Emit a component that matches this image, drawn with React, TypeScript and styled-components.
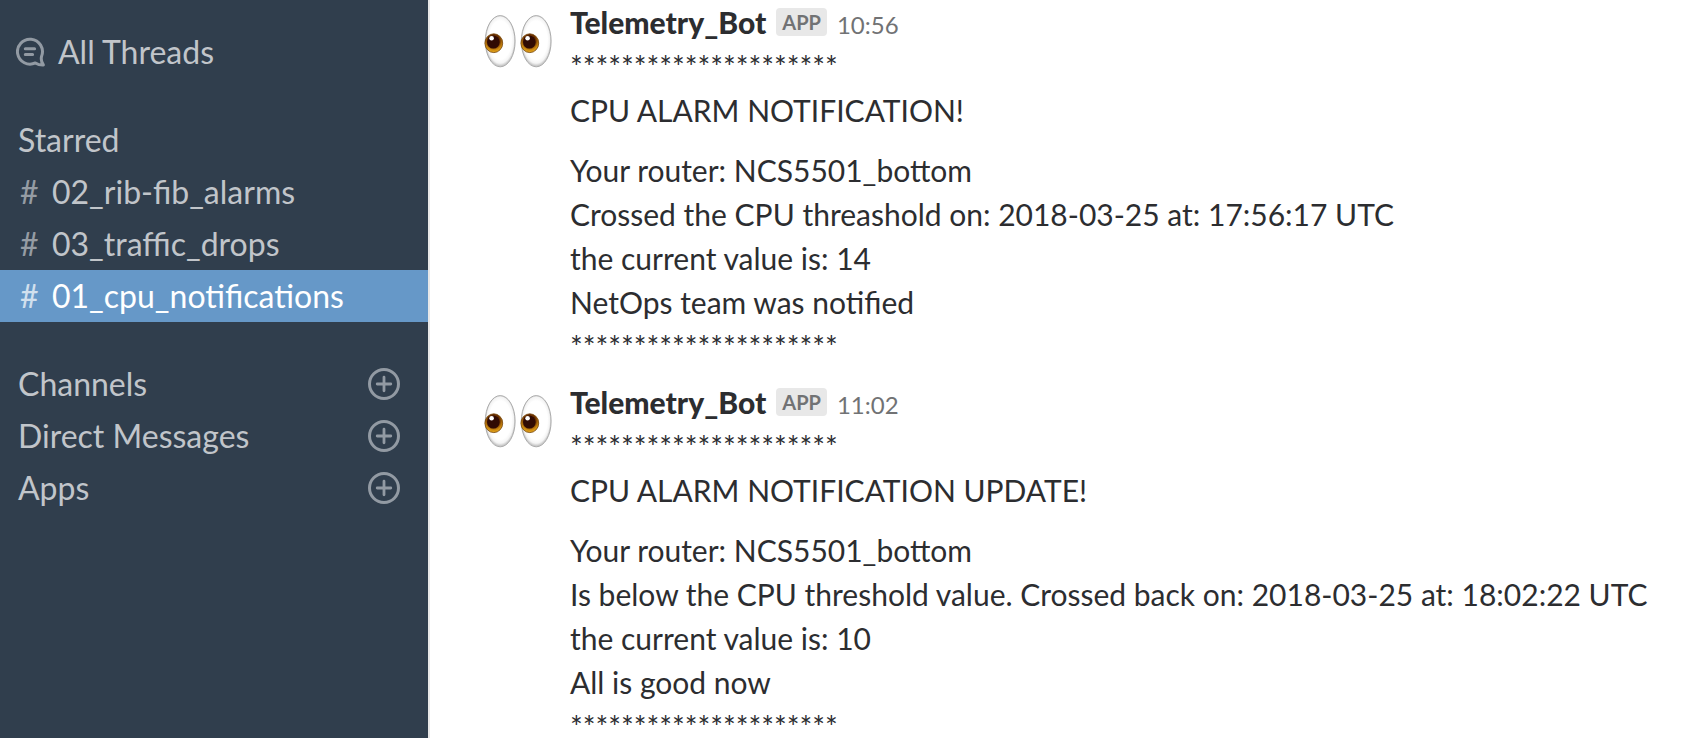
import React from "react";
import styled, { createGlobalStyle } from "styled-components";

const GlobalStyle = createGlobalStyle`
  *, *::before, *::after { box-sizing: border-box; }
  body {
    margin: 0;
    background: #ffffff;
    color: #2c2d30;
    font-family: Lato, "Open Sans", sans-serif;
    font-size: 30px;
    line-height: 44px;
  }
`;

const Shell = styled.div`
  display: grid;
  grid-template-columns: 430px minmax(0, 1fr);
  height: 100vh;
`;

const Sidebar = styled.nav`
  display: flex;
  flex-direction: column;
  gap: 36px;
  padding: 26px 0;
  background: #303e4d;
  border-right: 2px solid #e8e8e8;
  color: #c1c5ca;
  font-size: 32px;
  line-height: 52px;
  overflow: hidden;
`;

const ThreadsLink = styled.a`
  display: flex;
  align-items: center;
  gap: 12px;
  padding-left: 16px;
  color: inherit;
  text-decoration: none;
`;

const Group = styled.section`
  display: flex;
  flex-direction: column;
`;

const GroupRow = styled.div`
  display: flex;
  align-items: center;
  justify-content: space-between;
  padding: 0 28px 0 18px;
`;

const GroupTitle = styled.h2`
  margin: 0;
  font-size: inherit;
  font-weight: 400;
`;

const ChannelList = styled.ul`
  margin: 0;
  padding: 0;
  list-style: none;
`;

const ChannelLink = styled.a<{ $active?: boolean }>`
  display: flex;
  padding-left: 20px;
  background: ${(p) => (p.$active ? "#6698c8" : "transparent")};
  color: ${(p) => (p.$active ? "#ffffff" : "inherit")};
  text-decoration: none;
`;

const Hash = styled.span`
  width: 32px;
  flex: none;
  opacity: 0.7;
`;

const AddButton = styled.button`
  display: flex;
  padding: 0;
  border: 0;
  background: none;
  color: #929aa3;
  cursor: pointer;
`;

const Messages = styled.main`
  display: flex;
  flex-direction: column;
  gap: 12px;
  padding: 0 32px 0 52px;
  overflow-y: auto;
  scrollbar-width: none;
`;

const MessageRow = styled.article`
  display: grid;
  grid-template-columns: 72px minmax(0, 1fr);
  column-gap: 16px;
`;

const Avatar = styled.div`
  padding-top: 5px;
`;

const Header = styled.header`
  display: flex;
  align-items: baseline;
  height: 44px;
`;

const Author = styled.a`
  color: #2c2d30;
  font-weight: 900;
  text-decoration: none;
`;

const Badge = styled.span`
  align-self: flex-start;
  margin: 8px 10px 0;
  padding: 0 6px;
  border-radius: 4px;
  background: #e8e8e8;
  color: #717274;
  font-size: 20px;
  font-weight: 700;
  line-height: 28px;
`;

const Time = styled.time`
  color: #717274;
  font-size: 24px;
`;

const Paragraph = styled.p`
  margin: 0 0 16px;

  &:last-child {
    margin-bottom: 0;
  }
`;

const Line = styled.span`
  display: block;
`;

function ThreadsIcon() {
  return (
    <svg width="30" height="30" viewBox="0 0 30 30" fill="none" stroke="#929aa3" strokeLinecap="round" strokeLinejoin="round" aria-hidden="true">
      <path
        strokeWidth="3"
        d="M25.6 19.2 A12.5 12.5 0 1 0 19.4 25.9 Q23 28.2 27.4 28 C25.6 25.6 24.8 22.4 25.6 19.2 Z"
      />
      <path strokeWidth="3" d="M9.3 11.8H18.6M9.3 17.5H16.6" />
    </svg>
  );
}

function PlusIcon() {
  return (
    <svg width="32" height="32" viewBox="0 0 32 32" fill="none" stroke="currentColor" strokeLinecap="round" aria-hidden="true">
      <circle cx="16" cy="16" r="14.5" strokeWidth="3" />
      <path strokeWidth="2.8" d="M16 9.2V22.8M9.2 16H22.8" />
    </svg>
  );
}

function EyesIcon({ id }: { id: string }) {
  const white = `${id}-white`;
  const iris = `${id}-iris`;
  return (
    <svg width="72" height="72" viewBox="0 0 72 72" role="img" aria-label="Eyes">
      <defs>
        <radialGradient id={white} cx="0.5" cy="0.48" r="0.5">
          <stop offset="0.75" stopColor="#ffffff" />
          <stop offset="0.9" stopColor="#f4f4f4" />
          <stop offset="1" stopColor="#c8c8c8" />
        </radialGradient>
        <radialGradient id={iris} cx="0.5" cy="0.35" r="0.66">
          <stop offset="0.5" stopColor="#6b3000" />
          <stop offset="0.76" stopColor="#c8860f" />
          <stop offset="1" stopColor="#f0b020" />
        </radialGradient>
      </defs>
      {[0, 36].map((dx) => (
        <g key={dx} transform={`translate(${dx} 0)`}>
          <ellipse cx="18.2" cy="36.2" rx="14.9" ry="25.6" fill={`url(#${white})`} stroke="#acacac" strokeWidth="1" />
          <ellipse cx="11.8" cy="38.2" rx="8.9" ry="9.4" fill={`url(#${iris})`} stroke="#704009" strokeWidth="0.8" />
          <ellipse cx="11.3" cy="37" rx="6.3" ry="6.6" fill="#300b03" />
          <circle cx="9.6" cy="33.2" r="2.3" fill="#ffffff" />
        </g>
      ))}
    </svg>
  );
}

const channels = [
  { name: "02_rib-fib_alarms" },
  { name: "03_traffic_drops" },
  { name: "01_cpu_notifications", active: true },
];

const sections = ["Channels", "Direct Messages", "Apps"];

const stars = "*********************";

const messages = [
  {
    id: "m1",
    time: "10:56",
    paragraphs: [
      [stars, "CPU ALARM NOTIFICATION!"],
      [
        "Your router: NCS5501_bottom",
        "Crossed the CPU threashold on: 2018-03-25 at: 17:56:17 UTC",
        "the current value is: 14",
        "NetOps team was notified",
        stars,
      ],
    ],
  },
  {
    id: "m2",
    time: "11:02",
    paragraphs: [
      [stars, "CPU ALARM NOTIFICATION UPDATE!"],
      [
        "Your router: NCS5501_bottom",
        "Is below the CPU threshold value. Crossed back on: 2018-03-25 at: 18:02:22 UTC",
        "the current value is: 10",
        "All is good now",
        stars,
      ],
    ],
  },
];

export default function App() {
  return (
    <>
      <GlobalStyle />
      <Shell>
        <Sidebar aria-label="Workspace">
          <ThreadsLink href="#threads">
            <ThreadsIcon />
            All Threads
          </ThreadsLink>
          <Group>
            <GroupRow>
              <GroupTitle>Starred</GroupTitle>
            </GroupRow>
            <ChannelList>
              {channels.map((c) => (
                <li key={c.name}>
                  <ChannelLink href={`#${c.name}`} $active={c.active} aria-current={c.active ? "page" : undefined}>
                    <Hash>#</Hash>
                    {c.name}
                  </ChannelLink>
                </li>
              ))}
            </ChannelList>
          </Group>
          <Group>
            {sections.map((title) => (
              <GroupRow key={title}>
                <GroupTitle>{title}</GroupTitle>
                <AddButton type="button" aria-label={`Add to ${title}`}>
                  <PlusIcon />
                </AddButton>
              </GroupRow>
            ))}
          </Group>
        </Sidebar>
        <Messages>
          {messages.map((m) => (
            <MessageRow key={m.id}>
              <Avatar>
                <EyesIcon id={m.id} />
              </Avatar>
              <div>
                <Header>
                  <Author href="#telemetry-bot">Telemetry_Bot</Author>
                  <Badge>APP</Badge>
                  <Time>{m.time}</Time>
                </Header>
                {m.paragraphs.map((lines, i) => (
                  <Paragraph key={i}>
                    {lines.map((text, j) => (
                      <Line key={j}>{text}</Line>
                    ))}
                  </Paragraph>
                ))}
              </div>
            </MessageRow>
          ))}
        </Messages>
      </Shell>
    </>
  );
}
